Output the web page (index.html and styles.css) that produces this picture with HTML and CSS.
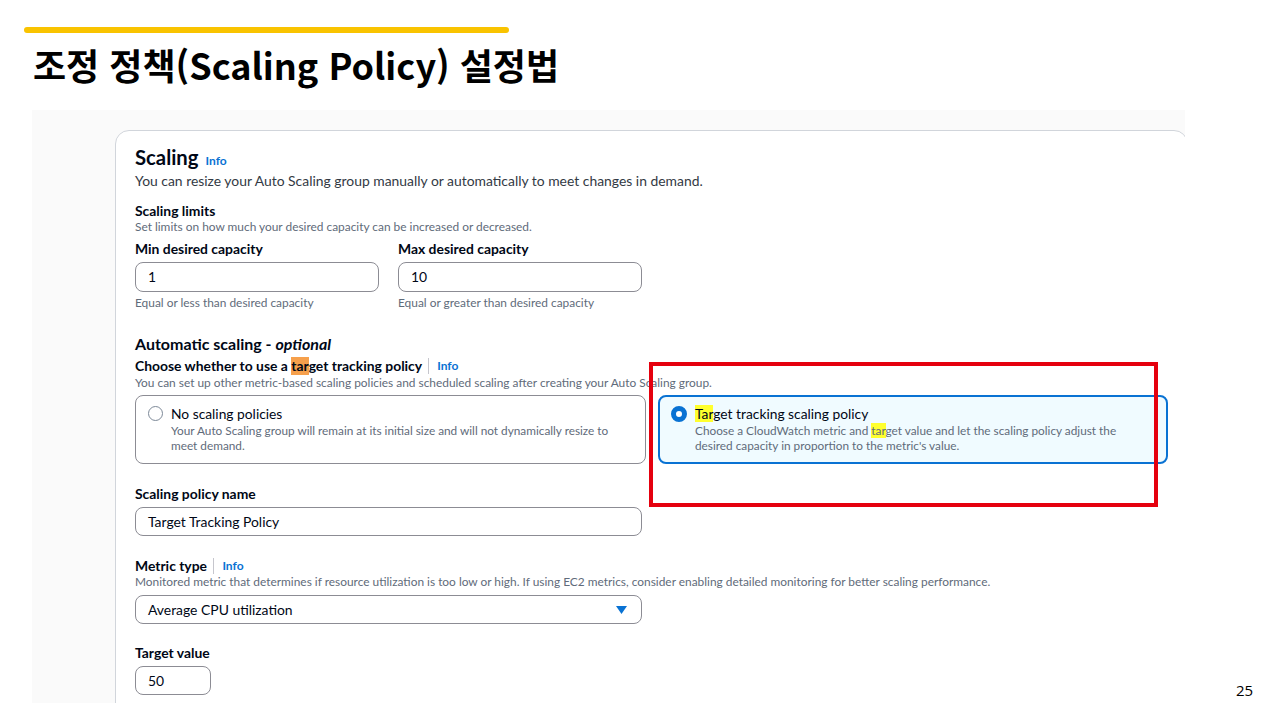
FILE: index.html
```html
<!DOCTYPE html>
<html lang="ko">
<head>
    <meta charset="UTF-8">
    <meta name="viewport" content="width=device-width, initial-scale=1.0">
    <title>조정 정책(Scaling Policy) 설정법</title>
    <link rel="stylesheet" href="styles.css">
</head>
<body>
    <div class="accent-bar"></div>
    <h1 class="slide-title">조정 정책(Scaling Policy) 설정법</h1>

    <div class="slide-body">
        <div class="shot">
            <div class="card">
                <h2 class="card-title">Scaling <a class="info">Info</a></h2>
                <p class="desc">You can resize your Auto Scaling group manually or automatically to meet changes in demand.</p>

                <div class="label gap-12">Scaling limits</div>
                <div class="hint">Set limits on how much your desired capacity can be increased or decreased.</div>
                <div class="limits">
                    <div class="field">
                        <div class="label">Min desired capacity</div>
                        <div class="input wide">1</div>
                        <div class="hint gap-4">Equal or less than desired capacity</div>
                    </div>
                    <div class="field">
                        <div class="label">Max desired capacity</div>
                        <div class="input wide">10</div>
                        <div class="hint gap-4">Equal or greater than desired capacity</div>
                    </div>
                </div>

                <h3 class="sub-title">Automatic scaling - <em>optional</em></h3>
                <div class="label gap-3">Choose whether to use a <mark class="hl-orange">tar</mark>get tracking policy <span class="divider"></span><a class="info">Info</a></div>
                <div class="hint gap-1">You can set up other metric-based scaling policies and scheduled scaling after creating your Auto Scaling group.</div>
                <div class="tiles">
                    <div class="tile">
                        <span class="radio"></span>
                        <div>
                            <div class="tile-title">No scaling policies</div>
                            <div class="tile-desc">Your Auto Scaling group will remain at its initial size and will not dynamically resize to meet demand.</div>
                        </div>
                    </div>
                    <div class="tile selected">
                        <span class="radio checked"></span>
                        <div>
                            <div class="tile-title"><mark class="hl-yellow">Tar</mark>get tracking scaling policy</div>
                            <div class="tile-desc">Choose a CloudWatch metric and <mark class="hl-yellow">tar</mark>get value and let the scaling policy adjust the desired capacity in proportion to the metric's value.</div>
                        </div>
                    </div>
                </div>

                <div class="label gap-21">Scaling policy name</div>
                <div class="input full">Target Tracking Policy</div>

                <div class="label gap-21">Metric type <span class="divider"></span><a class="info">Info</a></div>
                <div class="hint">Monitored metric that determines if resource utilization is too low or high. If using EC2 metrics, consider enabling detailed monitoring for better scaling performance.</div>
                <div class="input full select">
                    Average CPU utilization
                    <svg class="caret" width="11" height="8" viewBox="0 0 11 8"><path d="M0 0 H11 L5.5 8 Z" fill="#0972d3"/></svg>
                </div>

                <div class="label gap-20">Target value</div>
                <div class="input small">50</div>
            </div>

            <!-- 강조 표시 박스 -->
            <div class="red-box"></div>
        </div>
        <div class="page-num">25</div>
    </div>
</body>
</html>
```

FILE: styles.css
```css
body {
    margin: 0;
    background-color: #ffffff;
    font-family: 'Noto Sans CJK KR', 'Open Sans', sans-serif;
    color: #000000;
}

.accent-bar {
    margin: 27px 0 0 24px;
    width: 485px;
    height: 6px;
    border-radius: 3px;
    background-color: #f9c300;
}

.slide-title {
    margin: 3px 0 0 33px;
    height: 74px;
    font-size: 36px;
    line-height: 56px;
    font-weight: 700;
    letter-spacing: 0;
}

.slide-body {
    display: flex;
    align-items: flex-end;
}

.shot {
    position: relative;
    margin-left: 32px;
    width: 1153px;
    height: 593px;
    padding: 20px 0 0 83px;
    box-sizing: border-box;
    background-color: #fafafa;
    overflow: hidden;
    font-family: 'Lato', 'Liberation Sans', sans-serif;
    color: #000716;
}

.page-num {
    margin: 0 0 5px 51px;
    font-family: 'Open Sans', sans-serif;
    font-size: 15px;
    line-height: 16px;
}

.card {
    width: 1073px;
    height: 620px;
    box-sizing: border-box;
    padding: 14px 19px 0 19px;
    background-color: #ffffff;
    border: 1px solid #d1d5db;
    border-radius: 14px 14px 0 0;
}

.card-title {
    margin: 0;
    height: 24px;
    display: flex;
    align-items: baseline;
    font-size: 20.3px;
    line-height: 24px;
    font-weight: 700;
}

.info {
    color: #0972d3;
    font-size: 12px;
    font-weight: 700;
}

.card-title .info {
    margin-left: 7px;
}

.desc {
    margin: 3px 0 0;
    font-size: 13.9px;
    line-height: 18px;
    color: #333a44;
}

.label {
    height: 18px;
    font-size: 13.9px;
    line-height: 18px;
    font-weight: 700;
    display: flex;
    align-items: center;
    white-space: pre;
}

.hint {
    font-size: 11.9px;
    line-height: 14px;
    color: #5f6b7a;
}

.gap-1 { margin-top: 1px; }
.gap-3 { margin-top: 3px; }
.gap-4 { margin-top: 4px; }
.gap-12 { margin-top: 12px; }
.gap-20 { margin-top: 20px; }
.gap-21 { margin-top: 21px; }

.divider {
    display: inline-block;
    width: 1px;
    height: 16px;
    background-color: #c6c6cd;
    margin: 0 8px 0 3px;
}

.limits {
    display: flex;
    gap: 19px;
    margin-top: 6px;
}

.input {
    box-sizing: border-box;
    height: 29px;
    margin-top: 4px;
    padding: 0 12px;
    border: 1px solid #8c8c94;
    border-radius: 8px;
    font-size: 13.9px;
    line-height: 27px;
    background-color: #ffffff;
}

.input.wide {
    width: 244px;
    height: 30px;
    line-height: 28px;
}

.input.full {
    width: 507px;
}

.input.small {
    width: 76px;
}

.select {
    display: flex;
    justify-content: space-between;
    align-items: center;
    margin-top: 6px;
    padding-right: 14px;
}

.sub-title {
    margin: 24px 0 0;
    height: 20px;
    font-size: 16px;
    line-height: 20px;
    font-weight: 700;
}

.sub-title em {
    font-style: italic;
}

mark {
    color: inherit;
    padding: 0;
}

.hl-orange {
    background-color: #f6a04c;
}

.hl-yellow {
    background-color: #ffff2e;
}

.tiles {
    display: flex;
    gap: 12px;
    margin-top: 5px;
}

.tile {
    box-sizing: border-box;
    width: 511px;
    height: 69px;
    display: flex;
    gap: 8px;
    padding: 9px 20px 0 12px;
    border: 1px solid #8c8c94;
    border-radius: 8px;
    background-color: #ffffff;
}

.tile.selected {
    width: 510px;
    border: 2px solid #0972d3;
    padding: 8px 36px 0 11px;
    background-color: #f0fbff;
}

.radio {
    flex: none;
    box-sizing: border-box;
    width: 15px;
    height: 15px;
    margin-top: 1px;
    border: 1.5px solid #7d8998;
    border-radius: 50%;
    background-color: #ffffff;
}

.radio.checked {
    width: 16px;
    height: 16px;
    border: 5px solid #0972d3;
}

.tile-title {
    font-size: 13.8px;
    line-height: 18px;
}

.tile-desc {
    font-size: 11.8px;
    line-height: 15px;
    color: #5f6b7a;
}

.red-box {
    position: absolute;
    left: 617px;
    top: 252px;
    width: 509px;
    height: 145px;
    box-sizing: border-box;
    border: 4px solid #e5000e;
}
```
